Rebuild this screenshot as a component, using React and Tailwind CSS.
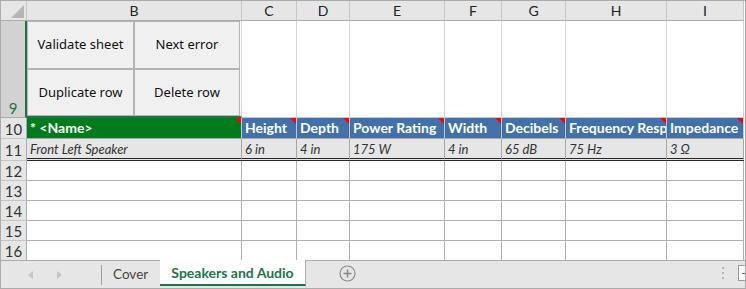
import React from "react";

const colLetters = ["B", "C", "D", "E", "F", "G", "H", "I"];
const headers = ["Height", "Depth", "Power Rating", "Width", "Decibels", "Frequency Resp", "Impedance"];
const values = ["6 in", "4 in", "175 W", "4 in", "65 dB", "75 Hz", "3 Ω"];

function RedTri() {
  return (
    <div className="absolute top-0 right-0 w-0 h-0 border-t-[6px] border-l-[6px] border-t-[#ff0000] border-l-transparent" />
  );
}

function RowHdr({ n }) {
  return (
    <div className="bg-[#e6e6e6] border-r border-r-[#ababab] border-b border-b-[#c6c6c6] flex items-end justify-center text-[15px] leading-[18px] text-[#333]">
      {n}
    </div>
  );
}

export default function App() {
  return (
    <div className="w-[746px] h-[289px] border border-[#ababab] bg-white font-['Lato','Liberation_Sans',sans-serif] overflow-hidden flex flex-col">
      <div className="grid grid-cols-[26px_215px_55px_53px_95px_57px_64px_101px_77px] grid-rows-[20px_97px_21px_22px_20px_20px_20px_20px_20px]">
        {/* header row */}
        <div className="relative bg-[#e6e6e6] border-r border-r-[#c6c6c6] border-b border-b-[#ababab]">
          <svg className="absolute right-[2px] bottom-[2px]" width="13" height="13" viewBox="0 0 13 13">
            <polygon points="13,0 13,13 0,13" fill="#b5b5b5" />
          </svg>
        </div>
        {colLetters.map((c) => (
          <div
            key={c}
            className="bg-[#e6e6e6] border-r border-r-[#c6c6c6] border-b border-b-[#ababab] flex items-center justify-center text-[14px] text-[#222]"
          >
            {c}
          </div>
        ))}

        {/* row 9 */}
        <div className="bg-[#d2d2d2] border-r-2 border-r-[#217346] border-b border-b-[#ababab] flex items-end justify-center text-[15px] leading-[18px] text-[#217346]">
          9
        </div>
        <div className="border-r border-r-[#d4d4d4] border-b-2 border-b-[#217346] bg-white">
          <div className="h-full w-[213px] grid grid-cols-[107px_106px] grid-rows-[48px_47px] border-r-2 border-b-2 border-[#8e8e8e] font-['Noto_Sans','Liberation_Sans',sans-serif] text-[13px] text-[#111]">
            <div className="bg-[#f0f0f0] border border-[#b4b4b4] flex items-center justify-center">Validate sheet</div>
            <div className="bg-[#f0f0f0] border border-[#b4b4b4] flex items-center justify-center">Next error</div>
            <div className="bg-[#f0f0f0] border border-[#b4b4b4] flex items-center justify-center">Duplicate row</div>
            <div className="bg-[#f0f0f0] border border-[#b4b4b4] flex items-center justify-center">Delete row</div>
          </div>
        </div>
        {headers.map((h, i) => (
          <div key={"r9" + i} className="bg-white border-r border-r-[#d4d4d4] border-b border-b-[#c8c8c8]" />
        ))}

        {/* row 10 */}
        <RowHdr n="10" />
        <div className="relative bg-[#007c1c] border-r border-r-[#c8c8c8] border-b border-b-[#a8a8a8] flex items-end pl-[3px] pb-[1px] text-white font-bold text-[14px] leading-[18px]">
          * &lt;Name&gt;
          <RedTri />
        </div>
        {headers.map((h) => (
          <div
            key={h}
            className="relative bg-[#4170ab] border-r border-r-[#c8c8c8] border-b border-b-[#a8a8a8] flex items-end pl-[3px] pb-[1px] text-white font-bold text-[14px] leading-[18px] whitespace-nowrap overflow-hidden"
          >
            {h}
            <RedTri />
          </div>
        ))}

        {/* row 11 */}
        <div className="bg-[#e6e6e6] border-r border-r-[#ababab] border-b border-b-[#c6c6c6] flex items-end justify-center pb-[1px] text-[15px] leading-[18px] text-[#333]">
          11
        </div>
        <div className="bg-[#e7e6e6] border-r border-r-[#a6a6a6] border-b-[3px] border-double border-b-[#262626] flex items-end pl-[3px] pb-[1px] italic text-[13px] leading-[16px] text-[#333]">
          Front Left Speaker
        </div>
        {values.map((v, i) => (
          <div
            key={"v" + i}
            className="bg-[#e7e6e6] border-r border-r-[#a6a6a6] border-b-[3px] border-double border-b-[#262626] flex items-end pl-[3px] pb-[1px] italic text-[13px] leading-[16px] text-[#333]"
          >
            {v}
          </div>
        ))}

        {/* rows 12-16 */}
        {["12", "13", "14", "15", "16"].map((n) => (
          <React.Fragment key={n}>
            <RowHdr n={n} />
            {colLetters.map((c) => (
              <div key={n + c} className="bg-white border-r border-r-[#b0b0b0] border-b border-b-[#b0b0b0]" />
            ))}
          </React.Fragment>
        ))}
      </div>

      {/* tab bar */}
      <div className="flex-1 bg-[#e6e6e6] border-t border-t-[#ababab] -mt-px flex items-start">
        <div className="w-[100px] h-full flex items-center">
          <svg className="ml-[27px]" width="5" height="8" viewBox="0 0 5 8">
            <polygon points="5,0 5,8 0,4" fill="#c6c6c6" />
          </svg>
          <svg className="ml-[24px]" width="5" height="8" viewBox="0 0 5 8">
            <polygon points="0,0 0,8 5,4" fill="#c6c6c6" />
          </svg>
        </div>
        <div className="w-px h-[20px] mt-[4px] bg-[#a0a0a0]" />
        <div className="w-[58px] h-full flex items-center pl-[11px] text-[13.5px] text-[#444]">
          Cover
        </div>
        <div className="w-[146px] h-[26px] -mt-px bg-white border-r border-r-[#ababab] border-b-2 border-b-[#217346] flex items-center justify-center text-[14px] font-bold text-[#217346]">
          Speakers and Audio
        </div>
        <div className="ml-[33px] h-full flex items-center pb-[2px]">
          <svg width="17" height="17" viewBox="0 0 17 17">
            <circle cx="8.5" cy="8.5" r="7.5" fill="none" stroke="#8a8a8a" strokeWidth="1.2" />
            <line x1="8.5" y1="4.5" x2="8.5" y2="12.5" stroke="#8a8a8a" strokeWidth="1.6" />
            <line x1="4.5" y1="8.5" x2="12.5" y2="8.5" stroke="#8a8a8a" strokeWidth="1.6" />
          </svg>
        </div>
        <div className="flex-1" />
        <div className="h-full flex flex-col justify-center gap-[3px] pb-[4px] mr-[14px]">
          <div className="w-[2px] h-[2px] bg-[#b5b5b5]" />
          <div className="w-[2px] h-[2px] bg-[#b5b5b5]" />
          <div className="w-[2px] h-[2px] bg-[#b5b5b5]" />
        </div>
        <div className="w-[7px] h-[16px] mt-[4px] bg-white border border-r-0 border-[#9a9a9a] flex items-center justify-end">
          <div className="w-[3px] h-[1px] bg-[#666]" />
        </div>
      </div>
    </div>
  );
}
